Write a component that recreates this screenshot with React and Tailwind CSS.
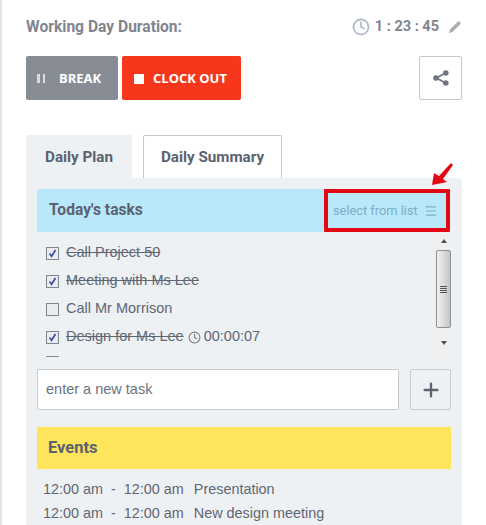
import { Clock, Plus, Menu } from 'lucide-react'

const tasks = [
  { label: 'Call Project 50', done: true },
  { label: 'Meeting with Ms Lee', done: true },
  { label: 'Call Mr Morrison', done: false },
  { label: 'Design for Ms Lee', done: true, time: '00:00:07' },
]

const events = [
  { from: '12:00 am', to: '12:00 am', title: 'Presentation' },
  { from: '12:00 am', to: '12:00 am', title: 'New design meeting' },
]

function Check({ checked }) {
  return (
    <span className="w-[13px] h-[13px] border border-[#80848c] bg-[#e9ebf1] shrink-0 flex items-center justify-center">
      {checked && (
        <svg viewBox="0 0 11 11" className="w-[11px] h-[11px]">
          <path d="M2.5 5.5 L4.6 8.3 L8.5 2" fill="none" stroke="#3c4f9e" strokeWidth="1.7" />
        </svg>
      )}
    </span>
  )
}

function Scrollbar() {
  return (
    <div className="w-[15px] shrink-0 bg-[#f0f0f0] flex flex-col items-center">
      <div className="h-[18px] flex items-center justify-center">
        <div className="w-0 h-0 border-x-[3.5px] border-x-transparent border-b-[4px] border-b-[#505050]" />
      </div>
      <div className="w-[15px] h-[78px] rounded-[2px] border border-[#8f8f8f] bg-gradient-to-r from-[#f2f2f2] to-[#c4c4c4] flex flex-col items-center justify-center gap-[1px]">
        <div className="w-[7px] h-px bg-[#555]" />
        <div className="w-[7px] h-px bg-[#555]" />
        <div className="w-[7px] h-px bg-[#555]" />
        <div className="w-[7px] h-px bg-[#555]" />
      </div>
      <div className="flex-1 flex items-center justify-center">
        <div className="w-0 h-0 border-x-[3.5px] border-x-transparent border-t-[4px] border-t-[#505050]" />
      </div>
    </div>
  )
}

export default function App() {
  return (
    <div className="w-[486px] h-[525px] overflow-hidden bg-white pl-[24px] pr-[24px] border-l-2 border-[#e4e7ea] font-['Liberation_Sans',sans-serif] text-[#5b6270]">
      <div className="flex items-center justify-between h-[54px]">
        <span className="pt-px font-['Roboto',sans-serif] font-bold text-[15.6px] text-[#7f8590]">Working Day Duration:</span>
        <div className="flex items-center gap-[5px] font-['Roboto',sans-serif] font-bold text-[14.5px] text-[#7f8590]">
          <Clock size={18} className="text-[#b4bcc6]" strokeWidth={2.4} />
          <span className="mr-[4px]">1 : 23 : 45</span>
          <svg viewBox="0 0 14 14" className="w-[14px] h-[14px]">
            <path d="M10.5 1 L13 3.5 L4.5 12 L1 13 L2 9.5 Z" fill="#a9adb2" />
          </svg>
        </div>
      </div>

      <div className="flex justify-between h-[44px] mt-[2px]">
        <div className="flex gap-[4px]">
          <button className="w-[92px] rounded-[2px] bg-[#888d95] text-white flex items-center pl-[11px] pt-px font-['Open_Sans',sans-serif] font-bold text-[13px]">
            <span className="flex gap-[3px] mr-[14px]">
              <span className="w-[2.5px] h-[9px] bg-[#d9dbdd]" />
              <span className="w-[2.5px] h-[9px] bg-[#d9dbdd]" />
            </span>
            BREAK
          </button>
          <button className="w-[119px] rounded-[2px] bg-[#f6371b] text-white flex items-center pl-[12px] pt-px font-['Open_Sans',sans-serif] font-bold text-[13px]">
            <span className="w-[10px] h-[10px] bg-white mr-[9px]" />
            CLOCK OUT
          </button>
        </div>
        <button className="w-[43px] rounded-[2px] border border-[#c4c7cb] flex items-center justify-center">
          <svg viewBox="0 0 16 16" className="w-[16px] h-[16px]">
            <path d="M12.5 3 L3.5 8 L12.5 13" fill="none" stroke="#6f7680" strokeWidth="1.8" />
            <circle cx="12.8" cy="3" r="2.8" fill="#6f7680" />
            <circle cx="3" cy="8" r="2.8" fill="#6f7680" />
            <circle cx="12.8" cy="13" r="2.8" fill="#6f7680" />
          </svg>
        </button>
      </div>

      <div className="flex mt-[35px] h-[43px] items-stretch">
        <div className="w-[106px] pt-px bg-[#eef1f4] rounded-t-[2px] flex items-center justify-center font-['Roboto',sans-serif] font-bold text-[15.2px]">Daily Plan</div>
        <div className="ml-[11px] w-[139px] pt-px border border-b-0 border-[#c4c7cb] rounded-t-[2px] flex items-center justify-center font-['Roboto',sans-serif] font-bold text-[15.2px]">Daily Summary</div>
      </div>

      <div className="bg-[#eef1f4] rounded-tr-[3px] px-[11px] pt-[11px]">
        <div className="relative h-[43px] mr-px bg-[#b9e8fb] flex items-center justify-between pl-[12px]">
          <span className="pt-px font-['Roboto',sans-serif] font-bold text-[15.6px]">Today's tasks</span>
          <div className="w-[126px] h-[43px] border-[4px] border-[#e30613] rounded-[1px] flex items-center justify-between pl-[5px] pr-[8px] font-['Roboto',sans-serif] text-[12.8px] text-[#79aec3]">
            <span>select from list</span>
            <Menu size={14} strokeWidth={2} />
          </div>
          <svg viewBox="0 0 23 24" className="absolute right-[-4px] top-[-27px] w-[23px] h-[24px]">
            <path d="M1 23 L3 11 L8 14 L20 1 L22 3 L12 17 L16 20 Z" fill="#e30613" />
          </svg>
        </div>

        <div className="flex h-[126px]">
          <div className="flex-1 pl-[9px] pt-[7px] overflow-hidden text-[14.5px] text-[#5f6672]">
            {tasks.map(t => (
              <div key={t.label} className="flex items-center h-[28px] gap-[7px]">
                <Check checked={t.done} />
                <span className={t.done ? 'line-through' : ''}>{t.label}</span>
                {t.time && (
                  <span className="flex items-center gap-[3px] -ml-[3px]">
                    <Clock size={13} className="text-[#777d87]" />
                    {t.time}
                  </span>
                )}
              </div>
            ))}
            <div className="mt-[5px] w-[13px] h-px bg-[#8a8a8a]" />
          </div>
          <Scrollbar />
        </div>

        <div className="flex justify-between mt-[11px]">
          <div className="w-[362px] h-[41px] bg-white border border-[#c6cbd0] rounded-[2px] flex items-center pl-[8px] text-[14.5px] text-[#6b7280]">enter a new task</div>
          <button className="w-[41px] h-[41px] border border-[#c6cbd0] rounded-[2px] flex items-center justify-center">
            <Plus size={22} strokeWidth={2.5} className="text-[#5b6270]" />
          </button>
        </div>

        <div className="mt-[17px] h-[42px] bg-[#ffe55c] flex items-center pl-[11px] font-['Roboto',sans-serif] font-bold text-[16.5px]">Events</div>

        <div className="pt-[9px] pl-[6px] text-[14.4px] text-[#5f6672]">
          {events.map(e => (
            <div key={e.title} className="flex h-[24px] items-center whitespace-pre">
              <span>{e.from}</span>
              <span className="mx-[8px]">-</span>
              <span>{e.to}</span>
              <span className="ml-[10px]">{e.title}</span>
            </div>
          ))}
        </div>
      </div>
    </div>
  )
}
